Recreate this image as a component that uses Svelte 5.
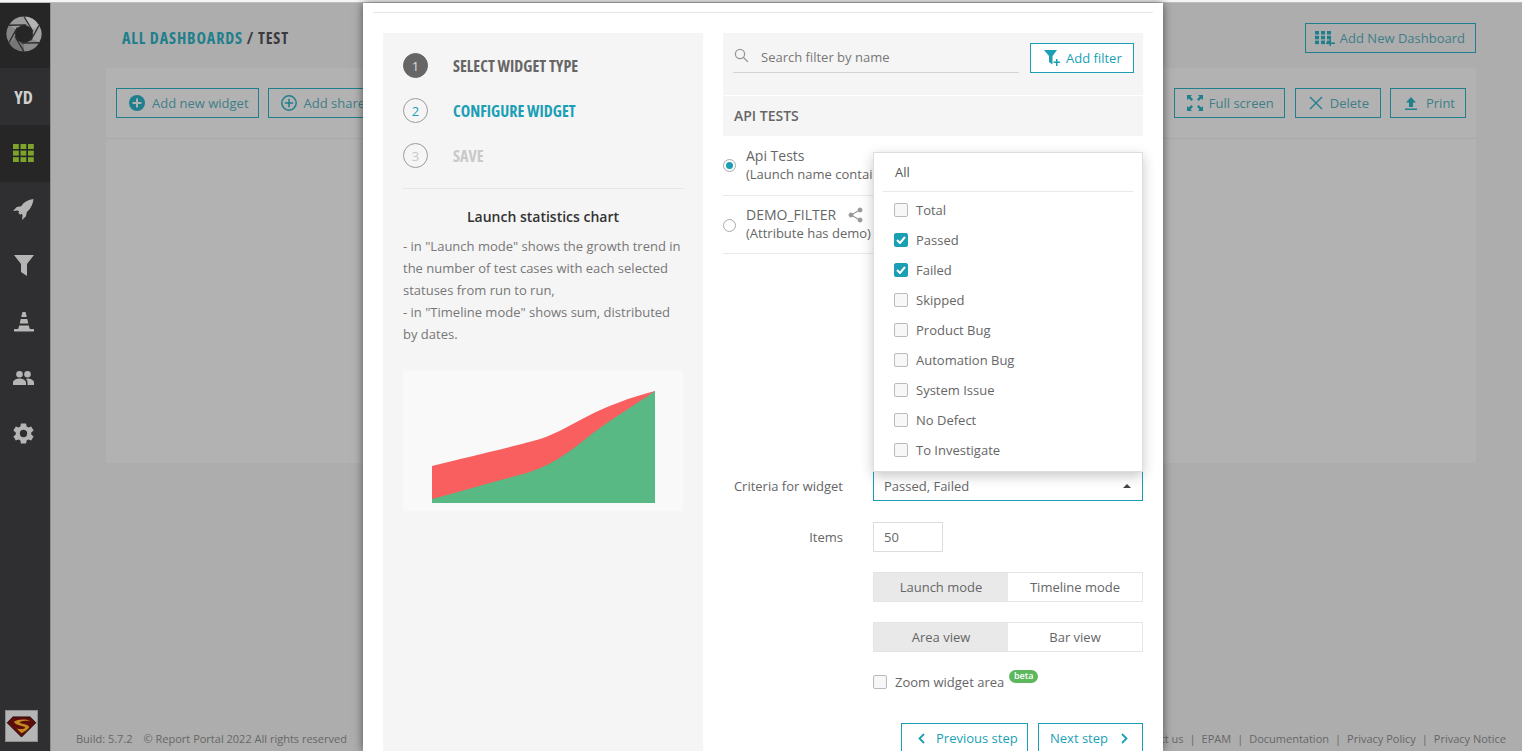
<script>
  const criteria = [
    ['Total', false], ['Passed', true], ['Failed', true], ['Skipped', false], ['Product Bug', false],
    ['Automation Bug', false], ['System Issue', false], ['No Defect', false], ['To Investigate', false]
  ];
  const footerLinks = ['Contact us', 'EPAM', 'Documentation', 'Privacy Policy', 'Privacy Notice'];
  const grid = [0, 1, 2].flatMap((r) => [0, 1, 2].map((c) => ({ x: c * 7.5, y: r * 6 })));
  const blades = [['0', '#b4b4b4'], ['60', '#a2a2a2'], ['120', '#8c8c8c'], ['180', '#767676'], ['240', '#848484'], ['300', '#9c9c9c']];
</script>

<div class="page">
  <div class="topline"></div>
  <div class="shell">
    <aside class="side">
      <div class="logo">
        <svg width="38" height="38" viewBox="0 0 38 38">
          {#each blades as [angle, fill]}
            <path transform="rotate({angle} 19 19)" d="M19 1.500A17.500 17.500 0 0 1 34.160 10.250L27.500 21 19 19z" {fill}/>
          {/each}
          <g stroke="#2a2a2a" stroke-width="1.300" fill="none">
            {#each blades as [angle]}
              <path transform="rotate({angle} 19 19)" d="M19 1.500L28 16.500"/>
            {/each}
          </g>
          <circle cx="19" cy="19" r="9" fill="#262626"/>
        </svg>
      </div>
      <div class="nav yd">YD</div>
      <div class="nav active">
        <svg width="21" height="18" viewBox="0 0 21 18" fill="#7da32b">
          {#each grid as g}<rect x={g.x} y={g.y * 1.1} width="5.800" height="5"/>{/each}
        </svg>
      </div>
      <div class="nav">
        <svg width="21" height="21" viewBox="0 0 22 22" fill="#b5b5b5"><path d="M21.500 0C16 .5 11.500 3 8.500 7.500L4 8.500 0 12.500l5-.5 1.500 1L5.500 14.500l2 2 1.500-1 1 1.500-.5 5 4-4 1-4.500c4-3 6.500-8 7-13.500z"/></svg>
      </div>
      <div class="nav">
        <svg width="20" height="21" viewBox="0 0 20 21" fill="#b5b5b5"><path d="M0 0h20l-7 9v12l-6-4V9z"/></svg>
      </div>
      <div class="nav">
        <svg width="20" height="20" viewBox="0 0 20 20" fill="#b5b5b5"><path d="M8.500 0h3l1.300 5H7.200zM6.700 7h6.600l1 4.500H5.700zM5.200 13.500h9.600l1 3.500H20v2.500H0V17h4.200z"/></svg>
      </div>
      <div class="nav">
        <svg width="21" height="14" viewBox="0 0 21 14" fill="#b5b5b5"><circle cx="6.500" cy="3.300" r="3.300"/><circle cx="14.500" cy="3.300" r="3.300"/><path d="M0 14v-2.500C0 9 4 7.500 6.500 7.500S13 9 13 11.500V14zM14.500 14v-3c0-1.200-.6-2.200-1.500-3 .5-.3 1-.5 1.500-.5 2.500 0 6.500 1.500 6.500 4V14z"/></svg>
      </div>
      <div class="nav">
        <svg width="25" height="25" viewBox="0 0 24 24" fill="#b5b5b5"><path d="M19.400 13a7.500 7.500 0 0 0 0-2l2.300-1.800-2.300-4-2.700 1.100a7.500 7.500 0 0 0-1.700-1L14.500 2.500h-5L9 5.300a7.500 7.500 0 0 0-1.700 1L4.600 5.200l-2.300 4L4.600 11a7.500 7.500 0 0 0 0 2l-2.300 1.800 2.300 4 2.700-1.100a7.500 7.500 0 0 0 1.700 1l.5 2.800h5l.5-2.800a7.500 7.500 0 0 0 1.700-1l2.700 1.100 2.300-4zM12 15.500a3.500 3.500 0 1 1 0-7 3.500 3.500 0 0 1 0 7z"/></svg>
      </div>
      <div class="avatar">
        <svg width="31" height="21" viewBox="0 0 32 22"><path d="M7 1h18l6 6-15 15L1 7z" fill="#5e0d0d" stroke="#2a0505"/><path d="M8 6c5-3 12-3 17-1-5 0-10 0-11 2 3 2 10 1 10 5-2 3-5 4-8 6l-5-5c4 1 8 1 9-1-3-2-10-2-12-6z" fill="#c48a1e"/></svg>
      </div>
    </aside>

    <main class="main">
      <header class="head">
        <div class="crumbs"><span class="crumb-link">ALL DASHBOARDS</span> / TEST</div>
        <button class="tool dash">
          <svg width="20" height="15" viewBox="0 0 20 15" fill="#1f7f8c">
            {#each grid as g}<rect x={g.x * .8} y={g.y * .8} width="4" height="3.500"/>{/each}
            <path d="M14.500 8h1.500v3.500H20V13h-4v2h-1.500v-2H11v-1.500h3.500z"/>
          </svg>
          Add New Dashboard
        </button>
      </header>
      <section class="panel">
        <div class="toolbar">
          <div class="tools">
            <button class="tool add-w">
              <svg width="16" height="16" viewBox="0 0 16 16"><circle cx="8" cy="8" r="8" fill="#1f7f8c"/><path d="M7 3.500h2V7h3.500v2H9v3.500H7V9H3.500V7H7z" fill="#b2b2b2"/></svg>
              Add new widget
            </button>
            <button class="tool add-w">
              <svg width="16" height="16" viewBox="0 0 16 16" fill="none" stroke="#1f7f8c" stroke-width="1.500"><circle cx="8" cy="8" r="7.200"/><path d="M8 3.800v8.400M3.800 8h8.400"/></svg>
              Add shared widget
            </button>
          </div>
          <div class="tools">
            <button class="tool full">
              <svg width="18" height="18" viewBox="0 0 18 18" fill="#1f7f8c"><path d="M1 1h5L4.500 2.800 7 5.300 5.300 7 2.800 4.500 1 6zM17 1v5l-1.800-1.500L12.700 7 11 5.300l2.500-2.500L12 1zM1 17v-5l1.800 1.500L5.300 11 7 12.700l-2.500 2.500L6 17zM17 17h-5l1.500-1.800L11 12.700l1.700-1.700 2.500 2.500L17 12z"/></svg>
              Full screen
            </button>
            <button class="tool del">
              <svg width="14" height="14" viewBox="0 0 14 14" stroke="#1f7f8c" stroke-width="1.400"><path d="M1 1l12 12M13 1L1 13"/></svg>
              Delete
            </button>
            <button class="tool print">
              <svg width="12" height="13" viewBox="0 0 12 13" fill="#1f7f8c"><path d="M6 0l5 5.500H8V10H4V5.500H1zM0 11.500h12V13H0z"/></svg>
              Print
            </button>
          </div>
        </div>
      </section>
      <footer class="foot">
        <div class="build"><span>Build: 5.7.2</span><span>© Report Portal 2022 All rights reserved</span></div>
        <nav class="links">
          {#each footerLinks as link, i}
            {#if i > 0}<span class="sep">|</span>{/if}<span>{link}</span>
          {/each}
        </nav>
      </footer>
    </main>
  </div>

  <div class="modal">
    <div class="modal-rule"></div>
    <div class="wizard">
      <div class="left">
        <ol class="steps">
          <li class="step done"><span class="num">1</span><span class="lbl">SELECT WIDGET TYPE</span></li>
          <li class="step cur"><span class="num">2</span><span class="lbl">CONFIGURE WIDGET</span></li>
          <li class="step todo"><span class="num">3</span><span class="lbl">SAVE</span></li>
        </ol>
        <h3 class="title">Launch statistics chart</h3>
        <p class="desc">- in "Launch mode" shows the growth trend in the number of test cases with each selected statuses from run to run,<br/>- in "Timeline mode" shows sum, distributed by dates.</p>
        <div class="preview">
          <svg width="280" height="140" viewBox="0 0 280 140">
            <path d="M29 95 C60 87 100 78 130 70 C150 65 165 55 185 45 C205 35 225 27 252 20 L252 132 L29 132Z" fill="#f95f5f"/>
            <path d="M29 128 C60 120 90 111 120 103 C150 95 170 78 190 62 C210 47 235 32 252 20 L252 132 L29 132Z" fill="#58b985"/>
          </svg>
        </div>
      </div>

      <div class="right">
        <div class="searchbar">
          <div class="search">
            <svg width="15" height="15" viewBox="0 0 15 15" fill="none" stroke="#999" stroke-width="1.300"><circle cx="6" cy="6" r="4.600"/><path d="M9.500 9.500L14 14"/></svg>
            <span>Search filter by name</span>
          </div>
          <button class="outline add">
            <svg width="17" height="16" viewBox="0 0 17 16" fill="#1a9fb5"><path d="M0 0h13L8.500 6v8.500L5 12V6z"/><path d="M12 9h1.500v2.500H16V13h-2.500v3H12v-3H9.500v-1.500H12z"/></svg>
            Add filter
          </button>
        </div>
        <div class="group">API TESTS</div>
        <div class="filter first">
          <span class="radio on"></span>
          <div class="ftext"><div class="fname">Api Tests</div><div class="fdesc">(Launch name contains api)</div></div>
        </div>
        <div class="filter">
          <span class="radio"></span>
          <div class="ftext">
            <div class="fname">DEMO_FILTER
              <svg class="share" width="15" height="16" viewBox="0 0 15 16" fill="#999" stroke="#999"><circle cx="12" cy="3" r="2"/><circle cx="3" cy="8" r="2"/><circle cx="12" cy="13" r="2"/><path d="M12 3L3 8l9 5" fill="none" stroke-width="1.200"/></svg>
            </div>
            <div class="fdesc">(Attribute has demo)</div>
          </div>
        </div>

        <div class="form">
          <label class="row crit">
            <span class="rowlabel">Criteria for widget</span>
            <span class="select">Passed, Failed<i class="caret"></i></span>
          </label>
          <label class="row">
            <span class="rowlabel">Items</span>
            <span class="items">50</span>
          </label>
          <div class="row"><span class="rowlabel"></span><div class="toggle"><span class="sel">Launch mode</span><span>Timeline mode</span></div></div>
          <div class="row"><span class="rowlabel"></span><div class="toggle"><span class="sel">Area view</span><span>Bar view</span></div></div>
          <div class="row zoom"><span class="rowlabel"></span><span class="box"></span><span>Zoom widget area</span><span class="beta">beta</span></div>
        </div>
        <div class="actions">
          <button class="outline prev"><svg width="7" height="11" viewBox="0 0 7 11" fill="none" stroke="#1a9fb5" stroke-width="1.800"><path d="M6 1L1.500 5.500 6 10"/></svg>Previous step</button>
          <button class="outline next">Next step<svg width="7" height="11" viewBox="0 0 7 11" fill="none" stroke="#1a9fb5" stroke-width="1.800"><path d="M1 1l4.500 4.500L1 10"/></svg></button>
        </div>

        <div class="menu">
          <div class="all">All</div>
          <ul class="opts">
            {#each criteria as [name, on]}
              <li class="opt"><span class="box" class:on>{#if on}<svg width="10" height="8" viewBox="0 0 10 8" fill="none" stroke="#fff" stroke-width="2"><path d="M1 4l3 3 5-6"/></svg>{/if}</span>{name}</li>
            {/each}
          </ul>
        </div>
      </div>
    </div>
  </div>
</div>

<style>
  :global(body) { margin: 0; background: #adadad; }
  * { box-sizing: border-box; }
  .page {
    position: relative; width: 1522px; height: 751px; overflow: hidden;
    font-family: "Open Sans", "Liberation Sans", sans-serif; font-size: 13px; color: #666;
    background: #adadad;
  }
  .topline { height: 3px; background: #f6f6f6; border-bottom: 1px solid #bdbdbd; }
  .shell { display: flex; height: 748px; }
  button { font: inherit; background: none; cursor: pointer; }

  .side { width: 51px; flex: none; background: #2f2f31; display: flex; flex-direction: column; border-right: 1px solid #8e8e8e; }
  .logo { height: 65px; background: #262626; display: flex; align-items: center; justify-content: center; padding-right: 3px; padding-bottom: 3px; }
  .nav { height: 56px; display: flex; align-items: center; justify-content: center; flex: none; padding-right: 3px; }
  .yd { height: 57px; color: #cfcfcf; font-size: 18px; font-weight: 700; font-stretch: 75%; }
  .nav.active { height: 56.500px; background: #262626; }
  .avatar { margin: auto 0 9px 5px; width: 33px; height: 32px; background: #b5b5b5; border: 1px solid #8e8e8e; display: flex; align-items: center; justify-content: center; }

  .main { flex: 1; display: flex; flex-direction: column; padding: 0 46px 0 55px; min-width: 0; }
  .head { height: 65px; display: flex; align-items: center; justify-content: space-between; padding: 5px 0 0 16px; }
  .crumbs { font-size: 16px; font-weight: 700; font-stretch: 75%; color: #3a3a3f; letter-spacing: .9px; }
  .crumb-link { color: #1f7f8c; }
  .tool { height: 30px; padding: 0 10px 0 13px; border: 1px solid #1f7f8c; color: #3f7e87; display: inline-flex; align-items: center; gap: 7px; font-size: 13px; white-space: nowrap; }
  .tool.add-w { padding: 0 9px 0 12px; }
  .tool.dash { padding: 0 10px 0 9px; gap: 5px; }
  .tool.full { padding: 0 10px 0 11px; gap: 5px; margin-right: 1px; }
  .tool.del { padding: 0 11px 0 13px; }
  .tool.print { padding: 0 10px 0 14px; gap: 9px; }
  .panel { height: 395px; background: #b2b2b2; }
  .toolbar { height: 71px; border-bottom: 1px solid #a9a9a9; padding: 0 10px; display: flex; align-items: center; justify-content: space-between; }
  .tools { display: flex; gap: 9px; }
  .foot { margin-top: auto; height: 20px; display: flex; justify-content: space-between; margin-right: -30px; margin-left: -30px; font-size: 11px; color: #676767; white-space: nowrap; }
  .build { display: flex; gap: 11px; }
  .links { display: flex; gap: 3px; }
  .sep { margin: 0 3px; }

  .modal { position: absolute; left: 363px; top: 3px; width: 800px; height: 748px; background: #fff; box-shadow: 0 0 9px rgba(0, 0, 0, .55); padding: 9px 10px 0; overflow: hidden; }
  .modal-rule { height: 1px; background: #e6e6e6; }
  .wizard { display: grid; grid-template-columns: 320px 420px; gap: 20px; padding: 20px 10px 0; }
  .left { background: #f5f5f5; height: 720px; padding: 0 20px; }
  .steps { list-style: none; margin: 0; padding: 20px 0 20px; border-bottom: 1px solid #e6e6e6; display: flex; flex-direction: column; gap: 20px; }
  .step { display: flex; align-items: center; height: 25px; gap: 25px; font-size: 16px; font-weight: 700; font-stretch: 75%; }
  .num { width: 25px; height: 25px; border-radius: 50%; border: 1px solid #9b9b9b; display: flex; align-items: center; justify-content: center; font-weight: 400; font-size: 13px; font-stretch: 100%; flex: none; }
  .done .num { background: #666; color: #ddd; border-color: #666; }
  .done .lbl { color: #666; }
  .cur .num, .cur .lbl { color: #1a9fb5; }
  .todo .num, .todo .lbl { color: #c9c9c9; }
  .title { margin: 18px 0 8px; font-size: 14px; font-weight: 600; color: #333; text-align: center; line-height: 20px; }
  .desc { margin: 0; line-height: 22px; color: #777; font-size: 13px; }
  .preview { margin-top: 26px; height: 140px; background: #f9f9f9; }
  .preview svg { display: block; }

  .right { position: relative; }
  .searchbar { height: 62px; background: #f5f5f5; padding: 10px 9px 0 10px; display: flex; gap: 11px; align-items: flex-start; }
  .search { flex: 1; height: 30px; border-bottom: 1px solid #d4d4d4; display: flex; align-items: center; gap: 12px; padding: 0 0 2px 1px; color: #777; }
  .search svg { margin-top: -3px; }
  .outline { height: 30px; background: #fff; border: 1px solid #1a9fb5; color: #1a9fb5; display: inline-flex; align-items: center; font-size: 13px; }
  .add { width: 104px; gap: 5px; padding: 0 0 0 13px; }
  .group { margin-top: 1px; height: 40px; background: #f5f5f5; padding: 0 11px 2px; display: flex; align-items: center; font-weight: 600; font-size: 14px; color: #666; }
  .filter { height: 58px; border-bottom: 1px solid #e9e9e9; display: flex; align-items: center; gap: 10px; }
  .filter.first { height: 60px; }
  .ftext { margin-top: -3px; }
  .radio { width: 13px; height: 13px; border: 1px solid #aaa; border-radius: 50%; background: #fff; flex: none; position: relative; margin-top: 2px; }
  .radio.on { margin-top: 0; }
  .radio.on::after { content: ""; position: absolute; inset: 2px; background: #1a9fb5; border-radius: 50%; }
  .fname { font-size: 14px; line-height: 20px; color: #666; display: flex; align-items: center; gap: 12px; }
  .fdesc { font-size: 13px; line-height: 17px; color: #666; white-space: nowrap; }

  .form { margin-top: 217px; display: flex; flex-direction: column; gap: 20px; }
  .row { display: flex; align-items: center; height: 30px; }
  .crit { margin-bottom: 1px; }
  .rowlabel { width: 120px; padding-right: 0; text-align: right; margin-right: 30px; flex: none; color: #666; }
  .select { width: 270px; height: 30px; border: 1px solid #1a9fb5; display: flex; align-items: center; justify-content: space-between; padding: 0 11px 0 10px; color: #666; }
  .caret { width: 0; height: 0; border: 4px solid transparent; border-bottom: 4px solid #444; border-top-width: 0; }
  .items { width: 70px; height: 30px; border: 1px solid #ddd; display: flex; align-items: center; padding-left: 10px; }
  .toggle { width: 270px; height: 30px; display: grid; grid-template-columns: 1fr 1fr; border: 1px solid #e4e4e4; }
  .toggle span { display: flex; align-items: center; justify-content: center; background: #fff; color: #666; }
  .toggle span.sel { background: #e9e9e9; }
  .zoom { margin-top: -5px; }
  .box { width: 14px; height: 14px; border: 1px solid #bbb; border-radius: 2px; background: #f7f7f7; flex: none; display: flex; align-items: center; justify-content: center; }
  .zoom .box { margin-right: 8px; }
  .beta { margin: -11px 0 0 5px; width: 29px; height: 13px; background: #5cb85c; color: #fff; border-radius: 7px; font-size: 9px; font-weight: 600; line-height: 12px; text-align: center; }
  .actions { margin-top: 26px; display: flex; justify-content: flex-end; gap: 10px; }
  .prev { width: 127px; padding-left: 16px; gap: 11px; }
  .next { width: 105px; padding-left: 11px; gap: 13px; }

  .menu { position: absolute; left: 150px; top: 119px; width: 270px; height: 320px; background: #fff; border: 1px solid #ddd; box-shadow: 0 4px 12px rgba(0, 0, 0, .22); padding: 0 9px; }
  .all { height: 39px; padding-left: 12px; display: flex; align-items: center; border-bottom: 1px solid #e9e9e9; color: #555; }
  .opts { list-style: none; margin: 3px 0 0; padding: 0 0 0 11px; }
  .opt { height: 30px; display: flex; align-items: center; gap: 8px; color: #666; }
  .box.on { background: #1a9fb5; border-color: #1a9fb5; }
</style>
